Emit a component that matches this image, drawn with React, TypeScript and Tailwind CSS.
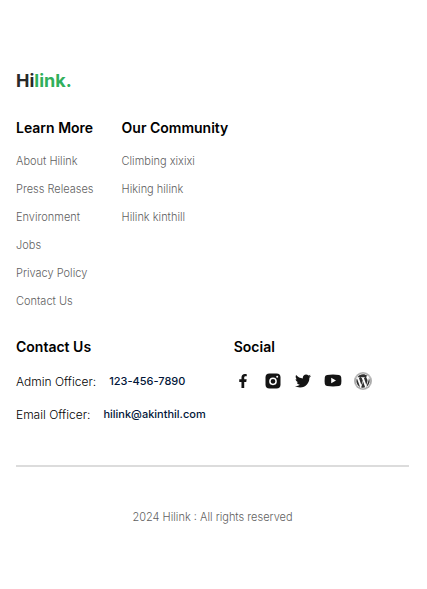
import React from "react";
import { FaFacebookF, FaTwitter, FaWordpress } from "react-icons/fa";

type LinkColumn = { title: string; links: string[] };

const columns: LinkColumn[] = [
  {
    title: "Learn More",
    links: ["About Hilink", "Press Releases", "Environment", "Jobs", "Privacy Policy", "Contact Us"],
  },
  {
    title: "Our Community",
    links: ["Climbing xixixi", "Hiking hilink", "Hilink kinthill"],
  },
];

const contacts = [
  { label: "Admin Officer:", value: "123-456-7890", href: "tel:123-456-7890" },
  { label: "Email Officer:", value: "hilink@akinthil.com", href: "mailto:hilink@akinthil.com" },
];

function InstagramIcon() {
  return (
    <svg viewBox="0 0 16 16" className="size-4" aria-hidden="true">
      <rect x="0.5" y="0.5" width="15" height="15" rx="4" fill="currentColor" />
      <circle cx="8" cy="8.3" r="3.1" fill="none" stroke="#fff" strokeWidth="1.5" />
      <circle cx="12.2" cy="3.8" r="1" fill="#fff" />
    </svg>
  );
}

function YoutubeIcon() {
  return (
    <svg viewBox="0 0 18 16" className="h-4 w-[18px]" aria-hidden="true">
      <path
        fill="currentColor"
        fillRule="evenodd"
        d="M3 2Q9 1.200 15 2q2 .3 2.200 2.200.4 3.300 0 6.600Q17 12.700 15 13q-6 .8-12 0Q1 12.700.8 10.800q-.4-3.300 0-6.600Q1 2.300 3 2Zm4.200 2.700v5.600L12 7.500Z"
      />
    </svg>
  );
}

const socials = [
  { name: "Facebook", icon: <FaFacebookF className="size-[14px]" /> },
  { name: "Instagram", icon: <InstagramIcon /> },
  { name: "Twitter", icon: <FaTwitter className="size-4" /> },
  { name: "YouTube", icon: <YoutubeIcon /> },
  {
    name: "WordPress",
    icon: (
      <span className="flex size-[18px] items-center justify-center rounded-full bg-[#b0b0b0]">
        <span className="flex rounded-full bg-white">
          <FaWordpress className="size-4 text-[#303030]" />
        </span>
      </span>
    ),
  },
];

function Heading({ children }: { children: React.ReactNode }) {
  return <h2 className="text-[14px] leading-5 font-semibold text-black">{children}</h2>;
}

export default function App() {
  return (
    <footer className="bg-white pt-[69px] pr-[18px] pb-16 pl-4 font-[Inter,'Liberation_Sans',sans-serif]">
      <a href="#home" className="block w-fit text-[18px] leading-6 font-bold text-[#292929]">
        Hi<span className="text-[#30af5b]">link.</span>
      </a>

      <nav className="mt-[25px] flex gap-7">
        {columns.map((column) => (
          <div key={column.title}>
            <Heading>{column.title}</Heading>
            <ul className="mt-[15px] flex flex-col gap-3 text-[11px] leading-4 font-light text-[#5f5f5f]">
              {column.links.map((link) => (
                <li key={link}>
                  <a href="#link">{link}</a>
                </li>
              ))}
            </ul>
          </div>
        ))}
      </nav>

      <div className="mt-7 flex gap-7">
        <section>
          <Heading>Contact Us</Heading>
          <ul className="mt-4 flex flex-col gap-[15px]">
            {contacts.map((contact) => (
              <li key={contact.label} className="flex gap-[13px]">
                <span className="text-[12px] leading-[18px] font-light text-black">{contact.label}</span>
                <a href={contact.href} className="text-[11px] leading-4 font-medium text-[#021639]">
                  {contact.value}
                </a>
              </li>
            ))}
          </ul>
        </section>
        <section>
          <Heading>Social</Heading>
          <ul className="mt-[15px] flex gap-3 text-[#141414]">
            {socials.map((social) => (
              <li key={social.name}>
                <a href="#social" aria-label={social.name} className="flex size-[18px] items-center justify-center">
                  {social.icon}
                </a>
              </li>
            ))}
          </ul>
        </section>
      </div>

      <hr className="mt-[41px] border-t-2 border-[#dcdcdc]" />
      <p className="mt-[42px] text-center text-[11px] leading-4 font-light text-[#5f5f5f]">2024 Hilink : All rights reserved</p>
    </footer>
  );
}
